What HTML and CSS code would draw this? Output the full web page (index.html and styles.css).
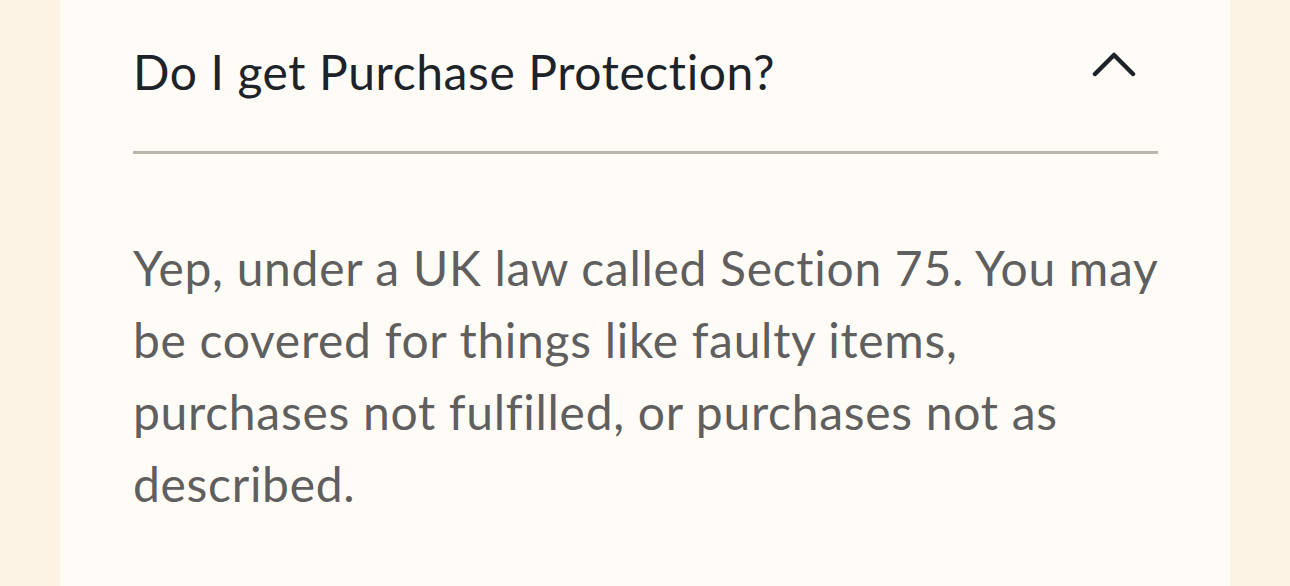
FILE: index.html
```html
<!DOCTYPE html>
<html lang="en">
<head>
<meta charset="utf-8">
<link rel="stylesheet" href="styles.css">
</head>
<body>
<div class="page">
  <section class="faq">
    <div class="faq-head">
      <h2 class="faq-q">Do I get Purchase Protection?</h2>
      <svg class="chev" width="44" height="28" viewBox="0 0 44 28" aria-hidden="true">
        <polyline points="3,24 22,5 41,24" fill="none" stroke="#1c2228" stroke-width="4.5" stroke-linecap="round" stroke-linejoin="round"/>
      </svg>
    </div>
    <p class="faq-a">Yep, under a UK law called Section 75. You may be covered for things like faulty items, purchases not fulfilled, or purchases not as described.</p>
  </section>
</div>
</body>
</html>
```
FILE: styles.css
```css
html, body {
  margin: 0;
  padding: 0;
  background: #fcf3e4;
  height: 100%;
}
.page {
  padding: 0 60px;
  height: 100%;
}
.faq {
  background: #fffcf7;
  height: 100%;
  padding: 0 72px 0 73px;
  box-sizing: border-box;
  font-family: Lato, "Open Sans", sans-serif;
}
.faq-head {
  display: flex;
  align-items: center;
  justify-content: space-between;
  padding-top: 42px;
  height: 109px;
  border-bottom: 3px solid #b9b6ad;
}
.faq-q {
  margin: 0;
  font-size: 48px;
  font-weight: 400;
  line-height: 60px;
  letter-spacing: 0.6px;
  color: #1d2329;
  align-self: flex-start;
}
.chev {
  align-self: flex-start;
  margin-top: 8px;
  margin-right: 22px;
}
.faq-a {
  margin: 0;
  padding-top: 78px;
  font-size: 48px;
  line-height: 72px;
  letter-spacing: 0.7px;
  color: #5f5f5f;
}
```
